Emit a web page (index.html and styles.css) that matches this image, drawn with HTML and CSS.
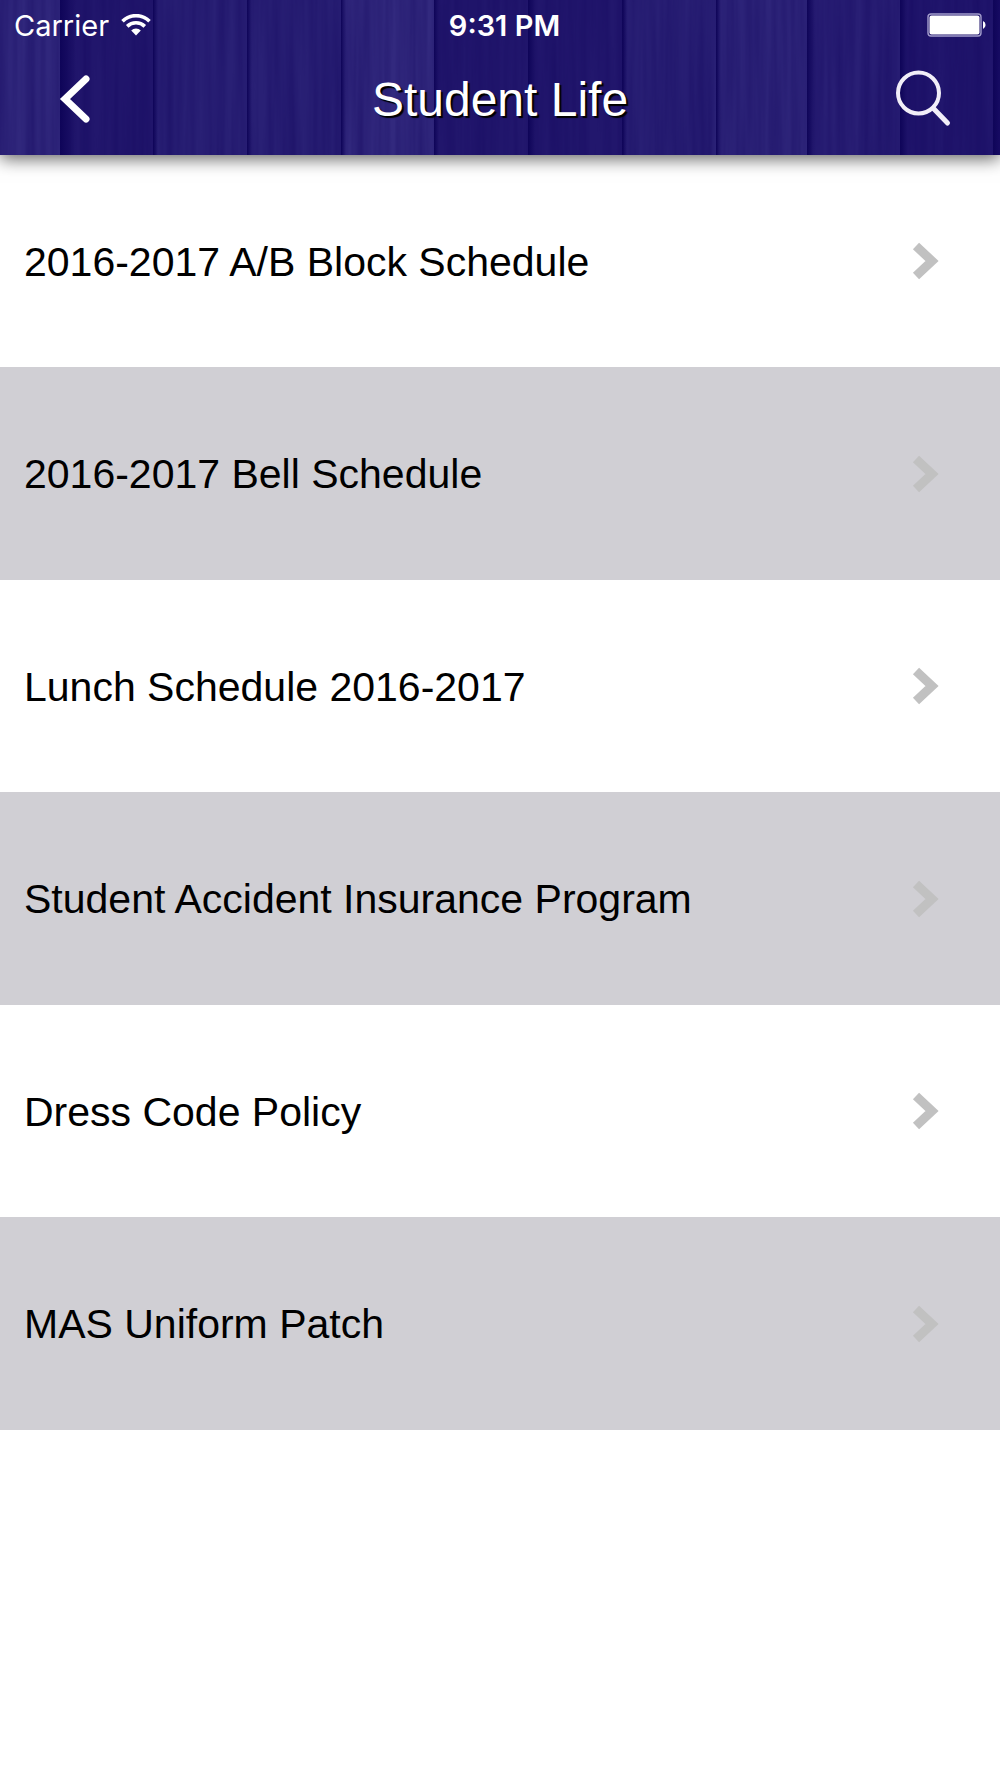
FILE: index.html
```
<!DOCTYPE html>
<html lang="en">

<head>
    <meta charset="UTF-8">
    <meta name="viewport" content="width=device-width, initial-scale=1.0">
    <title>Student Life</title>
    <link rel="stylesheet" href="styles.css">
</head>

<body>
    <header class="header">
        <!-- Wood plank background -->
        <svg class="planks" viewBox="0 0 1000 155" preserveAspectRatio="none" aria-hidden="true">
            <defs>
                <filter id="grain" x="0" y="0" width="100%" height="100%" color-interpolation-filters="sRGB">
                    <feTurbulence type="fractalNoise" baseFrequency="0.11 0.004" numOctaves="3" seed="4" />
                    <feColorMatrix values="0 0 0 0 0.07  0 0 0 0 0.02  0 0 0 0 0.36  1.6 0 0 0 -0.4" />
                </filter>
                <linearGradient id="edge">
                    <stop offset="0" stop-color="#0e0458" />
                    <stop offset="1" stop-color="#0e0458" stop-opacity="0" />
                </linearGradient>
            </defs>
            <rect width="60" height="155" fill="#30277c" />
            <rect x="60" width="94" height="155" fill="#22176d" />
            <rect x="154" width="93" height="155" fill="#292075" />
            <rect x="247" width="95" height="155" fill="#292075" />
            <rect x="342" width="92" height="155" fill="#32297e" />
            <rect x="434" width="94" height="155" fill="#22176d" />
            <rect x="528" width="96" height="155" fill="#22176d" />
            <rect x="624" width="94" height="155" fill="#2a2176" />
            <rect x="718" width="89" height="155" fill="#2e257a" />
            <rect x="807" width="93" height="155" fill="#291f75" />
            <rect x="900" width="94" height="155" fill="#21166d" />
            <rect x="994" width="6" height="155" fill="#170c63" />
            <rect width="1000" height="155" filter="url(#grain)" opacity="0.4" />
            <g fill="url(#edge)">
                <rect x="60" width="16" height="155" />
                <rect x="153" width="5" height="155" />
                <rect x="247" width="5" height="155" />
                <rect x="341" width="5" height="155" />
                <rect x="434" width="5" height="155" />
                <rect x="528" width="8" height="155" />
                <rect x="622" width="5" height="155" />
                <rect x="716" width="5" height="155" />
                <rect x="807" width="8" height="155" />
                <rect x="900" width="8" height="155" />
                <rect x="993" width="6" height="155" />
            </g>
        </svg>

        <div class="status-bar">
            <div class="carrier">
                <span>Carrier</span>
                <svg width="30" height="22" viewBox="0 0 30 22" aria-hidden="true">
                    <path d="M1.5 7.2a19.2 19.2 0 0 1 27 0" fill="none" stroke="#fff" stroke-width="3.6" />
                    <path d="M6.2 12.4a12.6 12.6 0 0 1 17.6 0" fill="none" stroke="#fff" stroke-width="3.6" />
                    <path d="M15 21.4l-4.8-4.9a6.8 6.8 0 0 1 9.6 0z" fill="#fff" />
                </svg>
            </div>
            <time class="clock">9:31 PM</time>
            <svg class="battery" width="60" height="24" viewBox="0 0 60 24" aria-hidden="true">
                <rect x="1" y="1" width="53" height="22" rx="3" fill="none" stroke="#a39dcb" stroke-width="1.4" />
                <rect x="2.5" y="2.5" width="50" height="19" rx="2" fill="#fff" />
                <path d="M56 8a4.4 4.4 0 0 1 0 8z" fill="#fff" />
            </svg>
        </div>

        <div class="nav-bar">
            <button class="icon-btn" type="button" aria-label="Back">
                <svg width="56" height="56" viewBox="0 0 56 56" aria-hidden="true">
                    <path d="M38 7L17 27l21 20" fill="none" stroke="#fff" stroke-width="7" stroke-linecap="round" />
                </svg>
            </button>
            <h1>Student Life</h1>
            <button class="icon-btn" type="button" aria-label="Search">
                <svg width="56" height="56" viewBox="0 0 56 56" aria-hidden="true">
                    <g fill="none" stroke="#f1eef8" stroke-width="4" stroke-linecap="round">
                        <circle cx="22.5" cy="21" r="20.5" />
                        <path d="M37.5 36.5l14 14.5" stroke-width="5" />
                    </g>
                </svg>
            </button>
        </div>
    </header>

    <main>
        <ul class="menu">
            <li>
                <a href="#">
                    <span>2016-2017 A/B Block Schedule</span>
                    <svg class="chevron" viewBox="0 0 26 38"><path d="M2 3l16 15L2 33" /></svg>
                </a>
            </li>
            <li>
                <a href="#">
                    <span>2016-2017 Bell Schedule</span>
                    <svg class="chevron" viewBox="0 0 26 38"><path d="M2 3l16 15L2 33" /></svg>
                </a>
            </li>
            <li>
                <a href="#">
                    <span>Lunch Schedule 2016-2017</span>
                    <svg class="chevron" viewBox="0 0 26 38"><path d="M2 3l16 15L2 33" /></svg>
                </a>
            </li>
            <li>
                <a href="#">
                    <span>Student Accident Insurance Program</span>
                    <svg class="chevron" viewBox="0 0 26 38"><path d="M2 3l16 15L2 33" /></svg>
                </a>
            </li>
            <li>
                <a href="#">
                    <span>Dress Code Policy</span>
                    <svg class="chevron" viewBox="0 0 26 38"><path d="M2 3l16 15L2 33" /></svg>
                </a>
            </li>
            <li>
                <a href="#">
                    <span>MAS Uniform Patch</span>
                    <svg class="chevron" viewBox="0 0 26 38"><path d="M2 3l16 15L2 33" /></svg>
                </a>
            </li>
        </ul>
    </main>
</body>

</html>
```
FILE: styles.css
```
* {
    margin: 0;
    padding: 0;
    box-sizing: border-box;
}

body {
    background: white;
    color: black;
    font-family: "Liberation Sans", Arial, sans-serif;
    min-height: 100vh;
}

.header {
    position: relative;
    padding-bottom: 19px;
    background: #241a70;
    box-shadow: 0 4px 16px rgba(0, 0, 0, 0.6);
    color: white;
}

/* sits behind the status bar and the title */
.planks {
    position: absolute;
    inset: 0;
    width: 100%;
    height: 100%;
}

.status-bar,
.nav-bar {
    position: relative;
    display: grid;
    grid-template-columns: 1fr auto 1fr;
    align-items: center;
}

.status-bar {
    height: 50px;
    padding: 0 13px 0 14px;
    font-family: Inter, Roboto, sans-serif;
    font-size: 29px;
}

.carrier {
    display: flex;
    align-items: center;
    gap: 12px;
}

.clock {
    padding-left: 8px;
    font-weight: 600;
}

.battery {
    justify-self: end;
}

.nav-bar {
    height: 86px;
    padding: 14px 48px 0;
}

.nav-bar h1 {
    font-size: 48px;
    font-weight: normal;
    line-height: 56px;
    text-shadow: 2px 2px 1px black;
}

.icon-btn {
    width: 56px;
    height: 56px;
    border: none;
    background: none;
    cursor: pointer;
}

.icon-btn svg {
    display: block;
    overflow: visible;
}

.icon-btn:last-child {
    justify-self: end;
}

.menu {
    list-style: none;
}

.menu a {
    display: flex;
    align-items: center;
    justify-content: space-between;
    min-height: 212px;
    padding: 2px 60px 0 24px;
    color: black;
    font-size: 41px;
    text-decoration: none;
}

.menu li:nth-child(even) a {
    min-height: 213px;
    background: #d0cfd4;
}

.chevron {
    width: 26px;
    height: 38px;
    fill: none;
    stroke: #c1c1c1;
    stroke-width: 9;
    overflow: visible;
}
```
